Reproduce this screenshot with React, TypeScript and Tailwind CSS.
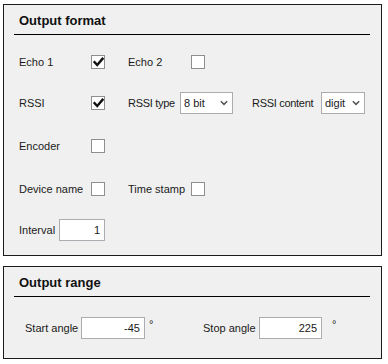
import React from 'react';

const font = { fontFamily: '"Liberation Sans", Arial, sans-serif' };

function Check({ checked = false }: { checked?: boolean }) {
  return (
    <div className="w-[14px] h-[14px] border border-[#8f8f8f] bg-white flex items-center justify-center shrink-0">
      {checked && (
        <svg width="11" height="10" viewBox="0 0 11 10">
          <path d="M1.5 5.2 L4.2 8 L9.5 1.8" fill="none" stroke="#111" strokeWidth="2.4" strokeLinecap="square" />
        </svg>
      )}
    </div>
  );
}

function Select({ value, width }: { value: string; width: string }) {
  return (
    <div className={`${width} h-[22px] border border-[#acacac] bg-white flex items-center justify-between pl-[3px] pr-[4px] shrink-0`}>
      <span>{value}</span>
      <svg width="8" height="6" viewBox="0 0 8 6">
        <path d="M0.8 1.2 L4 4.4 L7.2 1.2" fill="none" stroke="#555" strokeWidth="1.5" />
      </svg>
    </div>
  );
}

function Field({ value, width }: { value: string; width: string }) {
  return (
    <div className={`${width} h-[22px] border border-[#abadb3] bg-white flex items-center justify-end pr-[4px] shrink-0`}>
      {value}
    </div>
  );
}

function Panel({ title, className, children }: { title: string; className: string; children: React.ReactNode }) {
  return (
    <section className={`w-[379px] border border-[#1c1c1c] bg-[#f0f0f0] ${className}`}>
      <div className="ml-[10px] mr-[11px] h-[30px] border-b border-black pl-[5px] pt-[2px] flex items-center text-[13px] font-bold text-[#111]">
        {title}
      </div>
      {children}
    </section>
  );
}

export default function App() {
  return (
    <div className="w-[388px] h-[364px] bg-white pt-[4px] pl-[3px] text-[11px] text-[#1a1a1a]" style={font}>
      <Panel title="Output format" className="h-[252px]">
        <div className="pl-[15px] flex flex-col">
          <div className="mt-[16px] h-[22px] flex items-center">
            <span className="w-[72px]">Echo 1</span>
            <Check checked />
            <span className="ml-[23px] w-[63px]">Echo 2</span>
            <Check />
          </div>
          <div className="mt-[19px] h-[22px] flex items-center">
            <span className="w-[72px]">RSSI</span>
            <Check checked />
            <span className="ml-[23px] w-[52px] tracking-[-0.3px]">RSSI type</span>
            <Select value="8 bit" width="w-[53px]" />
            <span className="ml-[19px] w-[69px] tracking-[-0.3px]">RSSI content</span>
            <Select value="digit" width="w-[44px]" />
          </div>
          <div className="mt-[21px] h-[22px] flex items-center">
            <span className="w-[72px]">Encoder</span>
            <Check />
          </div>
          <div className="mt-[21px] h-[22px] flex items-center">
            <span className="w-[72px]">Device name</span>
            <Check />
            <span className="ml-[23px] w-[63px]">Time stamp</span>
            <Check />
          </div>
          <div className="mt-[19px] h-[22px] flex items-center">
            <span className="w-[40px]">Interval</span>
            <Field value="1" width="w-[46px]" />
          </div>
        </div>
      </Panel>
      <Panel title="Output range" className="mt-[10px] h-[93px]">
        <div className="pl-[21px] mt-[20px] h-[22px] flex items-center">
          <span className="w-[56px]">Start angle</span>
          <Field value="-45" width="w-[64px]" />
          <span className="ml-[4px] w-[54px] self-start -mt-[1px]">°</span>
          <span className="w-[56px]">Stop angle</span>
          <Field value="225" width="w-[63px]" />
          <span className="ml-[10px] self-start -mt-[1px]">°</span>
        </div>
      </Panel>
    </div>
  );
}
